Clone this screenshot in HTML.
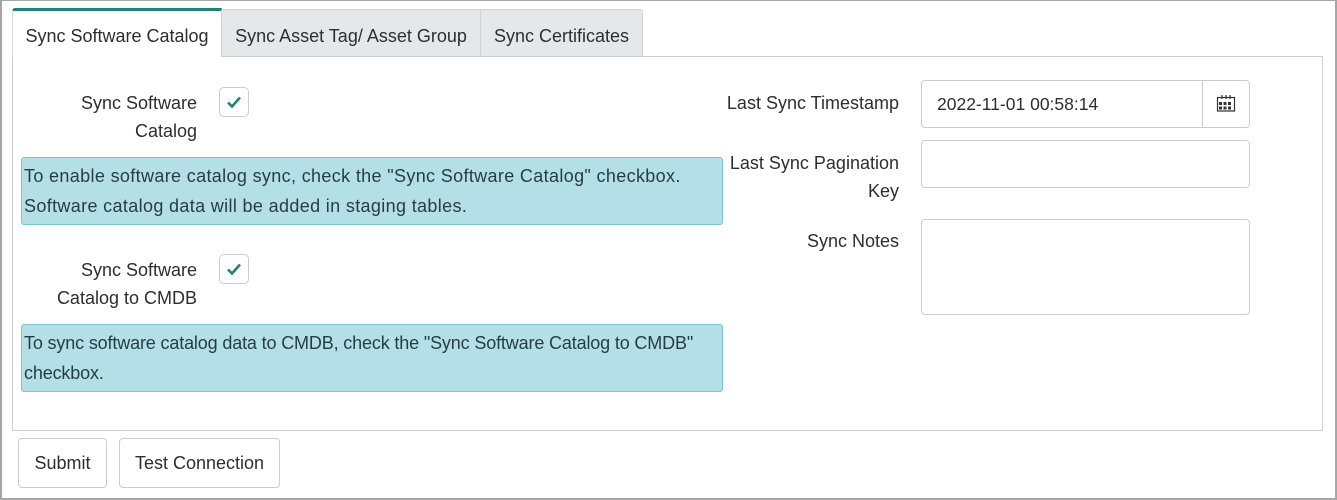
<!DOCTYPE html>
<html><head><style>
*{box-sizing:border-box;margin:0;padding:0}
body{width:1337px;height:500px;background:#fff;font-family:"Liberation Sans",sans-serif;color:#2e2e2e;font-size:18px;position:relative;overflow:hidden}
.frame{position:absolute;left:0;top:0;width:1337px;height:500px;border:2px solid #a6a6a6;border-top-width:1px}
.abs{position:absolute}
.tab{position:absolute;top:9px;height:48px;background:#e5e8eb;border:1px solid #cfd3d6;border-bottom:none;line-height:52px;text-align:center;font-size:18px}
.tab.act{background:#fff;border-top:3px solid #1f8476;border-left:1px solid #d6d6d6;line-height:50px;height:49px;z-index:2}
.panel{position:absolute;left:12px;top:56px;width:1311px;height:375px;border:1px solid #cfcfcf}
.lbl{position:absolute;text-align:right;line-height:28px}
.cb{position:absolute;width:30px;height:30px;border:1px solid #ccc;border-radius:5px}
.info{position:absolute;left:21px;width:702px;height:68px;background:#b5dfe6;border:1px solid #78c6d2;border-radius:3px;padding:3px 2px;line-height:30px;color:#253e44;letter-spacing:0.35px;white-space:nowrap;overflow:hidden}
.inp{position:absolute;left:921px;width:329px;border:1px solid #ccc;border-radius:4px}
.btn{position:absolute;top:438px;height:50px;border:1px solid #ccc;border-radius:4px;line-height:48px;text-align:center}
</style></head><body>
<div class="frame"></div>
<div class="tab" style="left:221px;width:260px">Sync Asset Tag/ Asset Group</div>
<div class="tab" style="left:480px;width:163px;border-radius:0 3px 0 0">Sync Certificates</div>
<div class="panel"></div>
<div class="tab act" style="left:12px;width:210px;top:8px;border-radius:3px 0 0 0">Sync Software Catalog</div>

<div class="lbl" style="left:20px;width:177px;top:89px">Sync Software<br>Catalog</div>
<div class="cb" style="left:219px;top:87px"><svg width="28" height="28" viewBox="0 0 28 28"><path d="M8 14.5l4 4 8-9" fill="none" stroke="#1f8476" stroke-width="2.6"/></svg></div>
<div class="info" style="top:157px">To enable software catalog sync, check the "Sync Software Catalog" checkbox.<br>Software catalog data will be added in staging tables.</div>

<div class="lbl" style="left:20px;width:177px;top:256px">Sync Software<br>Catalog to CMDB</div>
<div class="cb" style="left:219px;top:254px"><svg width="28" height="28" viewBox="0 0 28 28"><path d="M8 14.5l4 4 8-9" fill="none" stroke="#1f8476" stroke-width="2.6"/></svg></div>
<div class="info" style="top:324px;letter-spacing:-0.15px">To sync software catalog data to CMDB, check the "Sync Software Catalog to CMDB"<br>checkbox.</div>

<div class="lbl" style="left:640px;width:259px;top:89px">Last Sync Timestamp</div>
<div class="inp" style="top:80px;height:48px;line-height:46px;padding-left:15px;font-size:17.5px">2022-11-01 00:58:14
<div class="abs" style="left:280px;top:0;width:1px;height:46px;background:#ccc"></div>
<svg class="abs" style="left:294px;top:13px" width="20" height="18" viewBox="0 0 20 18"><rect x="1.5" y="3.5" width="17" height="13.5" fill="none" stroke="#333" stroke-width="1.2"/><path d="M6 1v4M10 1v4M14 1v4" stroke="#333" stroke-width="1.2"/><rect x="3" y="8" width="3" height="3" fill="#333"/><rect x="7.5" y="8" width="3" height="3" fill="#333"/><rect x="12" y="8" width="3" height="3" fill="#333"/><rect x="3" y="12.5" width="3" height="3" fill="#333"/><rect x="7.5" y="12.5" width="3" height="3" fill="#333"/><rect x="12" y="12.5" width="3" height="3" fill="#333"/></svg>
</div>
<div class="lbl" style="left:640px;width:259px;top:149px">Last Sync Pagination<br>Key</div>
<div class="inp" style="top:140px;height:48px"></div>
<div class="lbl" style="left:640px;width:259px;top:227px">Sync Notes</div>
<div class="inp" style="top:219px;height:96px"></div>

<div class="btn" style="left:18px;width:89px">Submit</div>
<div class="btn" style="left:119px;width:161px">Test Connection</div>
</body></html>
